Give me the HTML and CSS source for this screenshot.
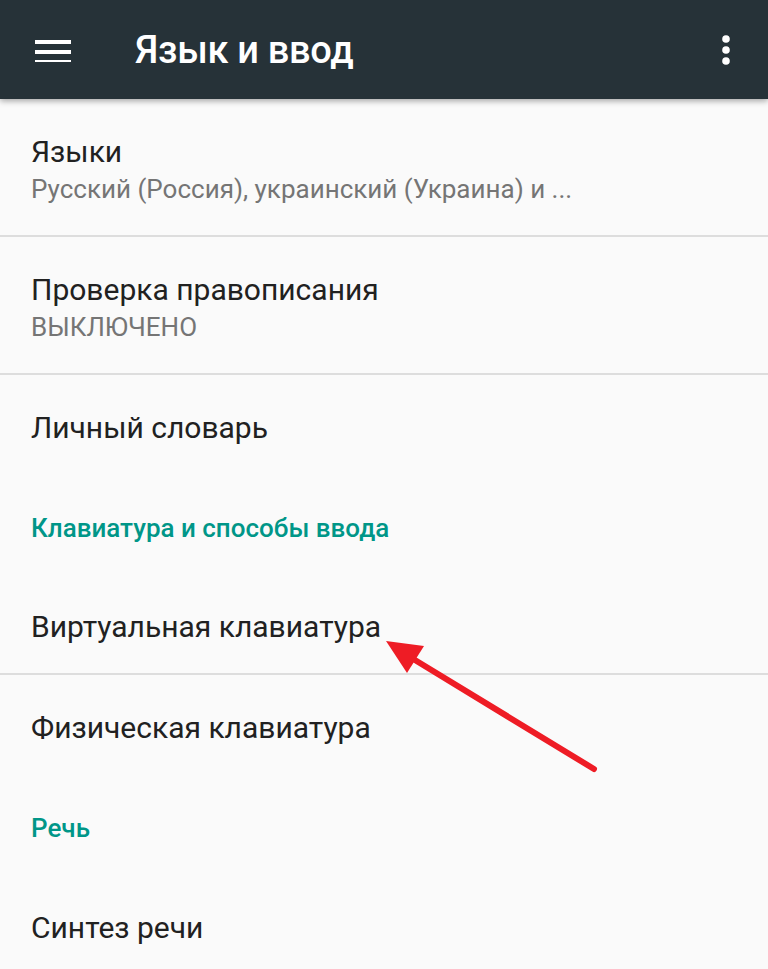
FILE: index.html
```html
<!DOCTYPE html>
<html lang="ru">
<head>
    <meta charset="UTF-8">
    <title>Язык и ввод</title>
    <link rel="stylesheet" href="styles.css">
</head>
<body>
<div id="screen">
    <div class="toolbar">
        <svg class="menu-icon" width="36" height="24" viewBox="0 0 36 24">
            <rect x="0" y="2" width="36" height="4" fill="#fff"/>
            <rect x="0" y="12" width="36" height="4" fill="#fff"/>
            <rect x="0" y="22" width="36" height="4" fill="#fff"/>
        </svg>
        <span class="title">Язык и ввод</span>
        <svg class="more-icon" width="10" height="32" viewBox="0 0 10 32">
            <circle cx="5" cy="5" r="3.8" fill="#fff"/>
            <circle cx="5" cy="16" r="3.8" fill="#fff"/>
            <circle cx="5" cy="27" r="3.8" fill="#fff"/>
        </svg>
    </div>

    <ul class="prefs">
        <li class="item two-line divided">
            <span class="item-title">Языки</span>
            <span class="item-sub">Русский (Россия), украинский (Украина) и ...</span>
        </li>
        <li class="item two-line divided">
            <span class="item-title">Проверка правописания</span>
            <span class="item-sub">ВЫКЛЮЧЕНО</span>
        </li>
        <li class="item">
            <span class="item-title">Личный словарь</span>
        </li>
        <li class="category">Клавиатура и способы ввода</li>
        <li class="item divided">
            <span class="item-title">Виртуальная клавиатура</span>
        </li>
        <li class="item">
            <span class="item-title">Физическая клавиатура</span>
        </li>
        <li class="category">Речь</li>
        <li class="item">
            <span class="item-title">Синтез речи</span>
        </li>
    </ul>

    <!--стрелка поверх списка-->
    <svg class="pointer" width="768" height="969" viewBox="0 0 768 969">
        <line x1="410" y1="657" x2="594" y2="769" stroke="#ee1c25" stroke-width="6" stroke-linecap="round"/>
        <polygon points="386,641 424,646 407,673" fill="#ee1c25"/>
    </svg>
</div>
</body>
</html>
```

FILE: styles.css
```css
* {
    margin: 0;
    padding: 0;
    box-sizing: border-box;
}

html, body {
    width: 768px;
    height: 969px;
    overflow: hidden;
    background: #fafafa;
    font-family: Roboto, "Noto Sans", "DejaVu Sans", sans-serif;
}

ul, li {
    list-style: none;
}

#screen {
    position: relative;
    width: 768px;
    height: 969px;
    background: #fafafa;
}

.toolbar {
    position: relative;
    z-index: 1;
    display: flex;
    align-items: center;
    height: 99px;
    padding: 0 35px 0 35px;
    background: #263238;
    box-shadow: 0 2px 6px rgba(0, 0, 0, 0.35);
}

.menu-icon {
    flex: none;
}

.title {
    margin-left: 64px;
    color: #fff;
    font-size: 38px;
    font-weight: 500;
    letter-spacing: -0.3px;
}

.more-icon {
    margin-left: auto;
    margin-right: 2px;
}

.item {
    display: flex;
    flex-direction: column;
    justify-content: center;
    height: 100px;
    padding: 6px 31px 0;
}

.item.two-line {
    height: 138px;
    padding-top: 6px;
}

.item.divided {
    border-bottom: 2px solid #dddddd;
}

.item-title {
    color: #212121;
    font-size: 30px;
    line-height: 36px;
}

.item-sub {
    margin-top: 2px;
    color: #757575;
    font-size: 26px;
    line-height: 34px;
}

.category {
    display: flex;
    align-items: center;
    height: 100px;
    padding: 6px 31px 0;
    color: #009688;
    font-size: 26px;
    font-weight: 500;
}

.pointer {
    position: absolute;
    left: 0;
    top: 0;
    pointer-events: none;
}
```
